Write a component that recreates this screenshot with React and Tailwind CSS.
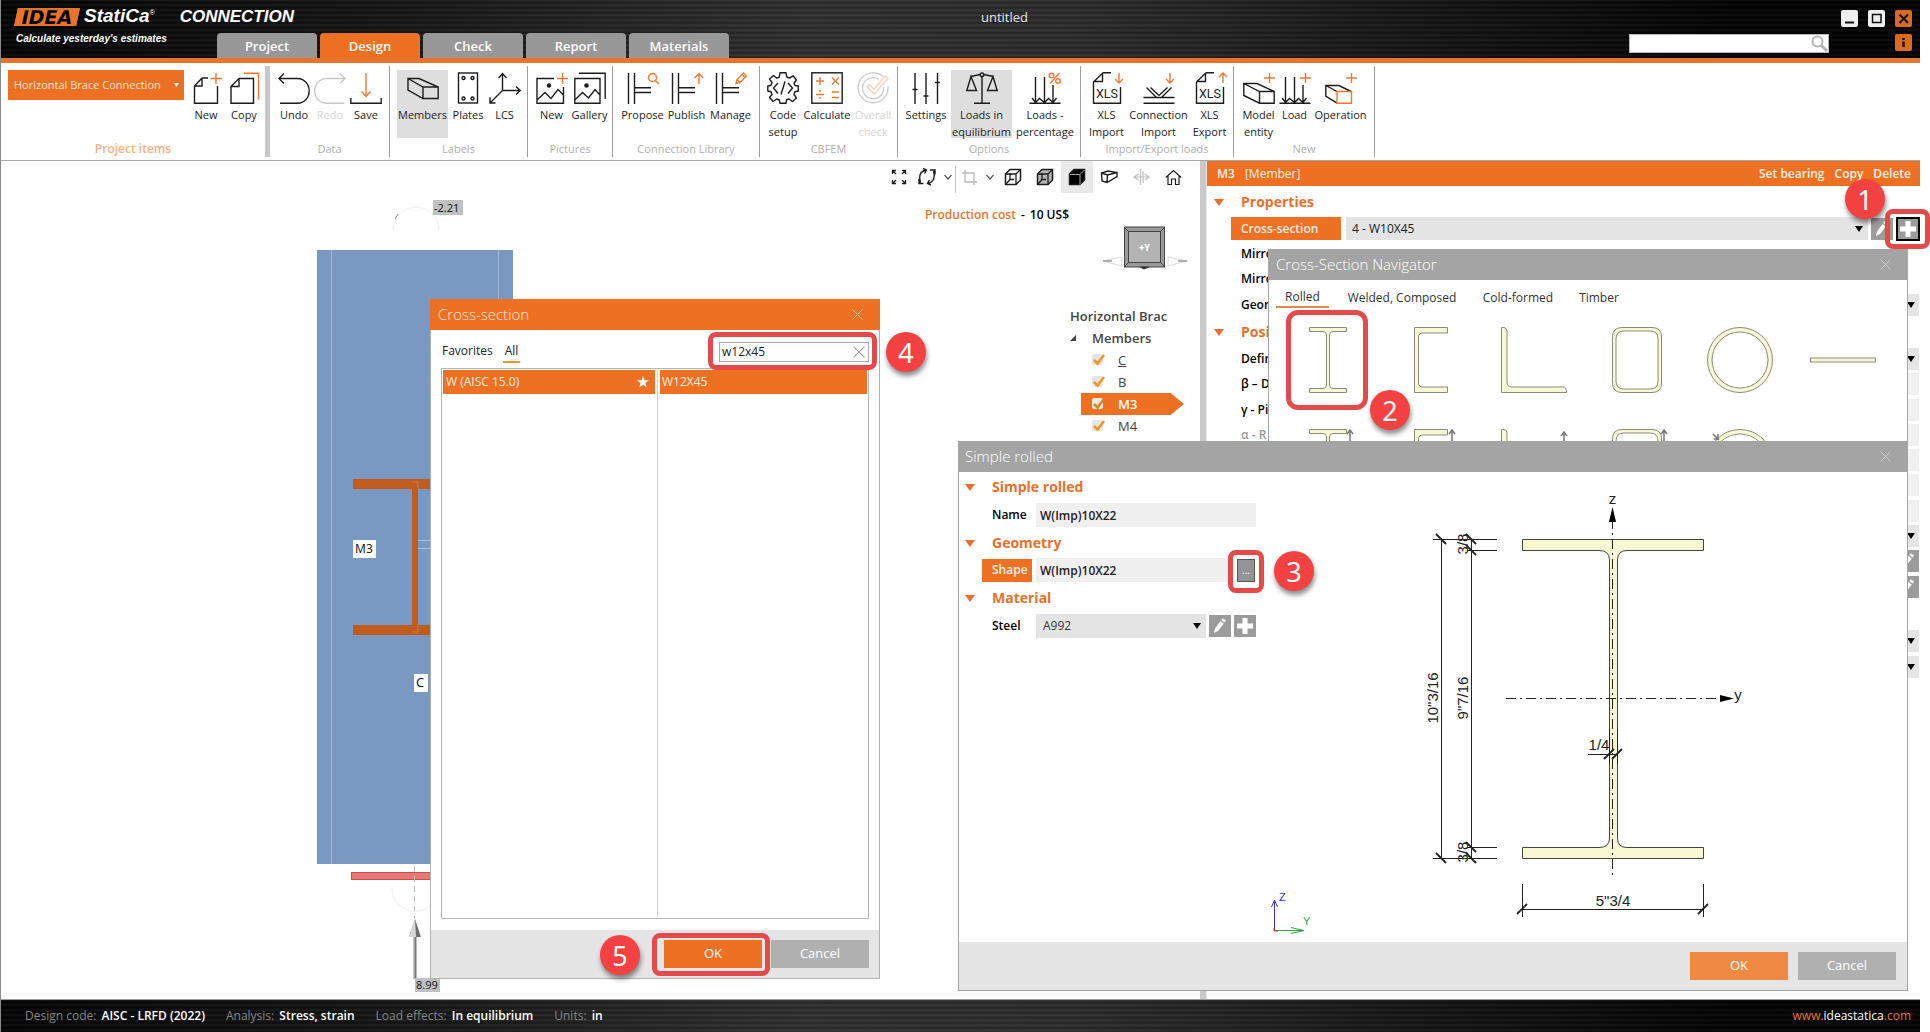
import React from "react";

const K = "#1c1c1c";
const O = "#ec7a35";

/* ---------- small shared pieces ---------- */

function Svg({ w = 32, h = 32, children, className = "", sw = 1.4, stroke = K }) {
  return (
    <svg width={w} height={h} viewBox={`0 0 ${w} ${h}`} fill="none" stroke={stroke} strokeWidth={sw} className={`shrink-0 overflow-visible ${className}`} aria-hidden="true">
      {children}
    </svg>
  );
}

const Caret = ({ className = "" }) => (
  <svg width="8" height="6" viewBox="0 0 8 6" className={`pointer-events-none ${className}`} aria-hidden="true">
    <path d="M0 0H8L4 6Z" fill="currentColor" />
  </svg>
);

const SectionCaret = () => (
  <svg width="10" height="7" viewBox="0 0 10 7" className="shrink-0 text-[#e8702a]" aria-hidden="true">
    <path d="M0 0H10L5 7Z" fill="currentColor" />
  </svg>
);

const Close = ({ size = 11, className = "" }) => (
  <svg width={size} height={size} viewBox="0 0 11 11" stroke="currentColor" strokeWidth="1" className={className} aria-hidden="true">
    <path d="M0.5 0.5 10.5 10.5M10.5 0.5 0.5 10.5" />
  </svg>
);

const PencilGlyph = () => (
  <svg width="22" height="22" viewBox="0 0 22 22" aria-hidden="true">
    <path d="M5 18 6 13.5 11.5 6 14.8 8.4 9.2 15.8ZM12.3 5 13.8 3.2 17 5.5 15.6 7.4Z" fill="#fff" />
  </svg>
);

const PlusGlyph = () => (
  <svg width="22" height="22" viewBox="0 0 22 22" aria-hidden="true">
    <path d="M11 3V19M3 11H19" stroke="#fff" strokeWidth="5" />
  </svg>
);

const SquareButton = ({ label, children, className = "" }) => (
  <button aria-label={label} className={`flex size-[22px] shrink-0 items-center justify-center bg-[#9b9b9b] ${className}`}>
    {children}
  </button>
);

const Step = ({ n, className }) => (
  <div className={`absolute z-50 flex size-10 items-center justify-center rounded-full bg-[#f44242] font-['Noto_Sans',sans-serif] text-[27px] leading-none text-white shadow-[1px_4px_5px_rgba(0,0,0,0.45)] ${className}`}>
    {n}
  </div>
);

const Mark = ({ className }) => (
  <div className={`pointer-events-none absolute z-40 rounded-[8px] border-5 border-[#e54a4a] ${className}`} />
);

/* ---------- ribbon icons ---------- */

const PageNew = () => (
  <Svg>
    <path d="M12 6 4.500 14V31.200H27.500V14M12 6H18M12 6V14H4.500" />
    <path d="M26 1V12M20.500 6.500H32" stroke={O} />
  </Svg>
);
const PageCopy = () => (
  <Svg>
    <path d="M11 6.500 3 14.500V31.200H25.500V6.500ZM11 6.500V14.500H3" />
    <path d="M16 1.200H30.500V27.500" stroke={O} />
  </Svg>
);
const Undo = () => (
  <Svg>
    <path d="M1 6.500H19.500C26 6.500 31.200 12 31.200 19C31.200 26 26 31.200 19.500 31.200H2" />
    <path d="M6 1.500 1 6.500 6 11.500" />
  </Svg>
);
const Redo = () => (
  <Svg stroke="#c9c9c9">
    <path d="M31 6.500H12.500C6 6.500 .8 12 .8 19C.8 26 6 31.200 12.500 31.200H30" />
    <path d="M26 1.500 31 6.500 26 11.500" />
  </Svg>
);
const Save = () => (
  <Svg>
    <path d="M.8 26V31.200H31.200V26" />
    <path d="M16 1V24M11.500 19.500 16 24.500 20.500 19.500" stroke={O} />
  </Svg>
);
const Members = () => (
  <Svg>
    <path d="M1 6.500H12L31.200 15V26.500H16L1 18ZM1 6.500 16 15H31.200M16 15V26.500" />
  </Svg>
);
const Plates = () => (
  <Svg>
    <rect x="6.500" y="1" width="19" height="30" />
    <circle cx="11.500" cy="6" r="1.500" />
    <circle cx="20.500" cy="6" r="1.500" />
    <circle cx="11.500" cy="26.500" r="1.500" />
    <circle cx="20.500" cy="26.500" r="1.500" />
  </Svg>
);
const Lcs = () => (
  <Svg>
    <path d="M13.500 1.500V18.500L1 31M13.500 18.500H31M9.500 6 13.500 1.500 17.500 6M27 14.500 31.200 18.500 27 22.500M1 25.500V31H6.500" />
  </Svg>
);
const PicNew = () => (
  <Svg>
    <path d="M18 6.500H1V31.200H27.500V15M1 28 9 20.500 15 26.500 22 17.500 27.500 23" />
    <circle cx="13" cy="13.500" r="1.600" fill={K} />
    <path d="M26.500 1V12M21 6.500H32" stroke={O} />
  </Svg>
);
const Gallery = () => (
  <Svg>
    <path d="M.8 6.500H26V31.200H.8ZM.8 28 8.500 20.500 14.500 26 21 17.500 26 23M5 1.200H31.200V27" />
    <circle cx="12.500" cy="13.500" r="1.600" fill={K} />
  </Svg>
);
const Frame = ({ children }) => (
  <Svg>
    <path d="M1.500 1V32M7.500 1V32M7.500 15.800H24M7.500 20.500H24" />
    {children}
  </Svg>
);
const Propose = () => (
  <Frame>
    <circle cx="25.500" cy="5.500" r="4" stroke={O} />
    <path d="M28.500 8.500 32 12" stroke={O} />
  </Frame>
);
const Publish = () => (
  <Frame>
    <path d="M28 12V1.500M23.500 6 28 1.500 32 6" stroke={O} />
  </Frame>
);
const Manage = () => (
  <Frame>
    <path d="M21 11.500 22 7.500 28.500 1 31.500 4 25 10.500ZM22.500 8 25 10.500M27 2.500 30 5.500" stroke={O} />
  </Frame>
);
const CodeSetup = () => (
  <Svg>
    <path d="M13 .8H19L19.800 5 22.500 6.200 26 3.800 29.500 8 27 11 28 13.500 31.300 14V19L28 19.800 27 22.500 29.500 26 25.500 29.500 22 27 19.500 28 19 31.300H13L12.300 28 9.800 27 6 29.500 2.500 25.500 5 22.500 4 19.800.8 19V14L4 13.200 5 10.500 2.500 7 6.500 3.500 9.800 6.200 12.300 5Z" strokeLinejoin="round" />
    <path d="M11 11 6.500 16 11 21.500M21 11 25.500 16 21 21.500M18 9.500 14 22.500" />
  </Svg>
);
const Calculate = () => (
  <Svg>
    <rect x=".8" y=".8" width="30.400" height="30.400" />
    <path d="M5 9H13M9 5V13M21 5.500 28 12.500M28 5.500 21 12.500M5 22.500H13M21 20H28M21 25.500H28" stroke={O} />
    <circle cx="9" cy="19" r="1" fill={O} stroke="none" />
    <circle cx="9" cy="26" r="1" fill={O} stroke="none" />
  </Svg>
);
const Overall = () => (
  <Svg stroke="#cfcfcf">
    <path d="M26 4.500A15 15 0 1 0 31 14M22 7.500A10.500 10.500 0 1 0 26.500 15" />
    <path d="M10 15 12.500 12.500 17 17.500 28 4 31 6.500 17.500 22Z" stroke="#f7d3bd" />
  </Svg>
);
const Settings = () => (
  <Svg>
    <path d="M5 1V32M16 1V32M27.500 1V32M2.500 17.500H7.500M13.500 24H18.500M25 10.500H30" />
  </Svg>
);
const Scales = () => (
  <Svg>
    <path d="M16 4V31.200M8 31.200H24M5 4.500 14 2.500M18 2.500 27 4.500M5 4.500.8 18.500H10.500ZM27 4.500 21.500 18.500H31.200Z" />
    <circle cx="16" cy="2.800" r="1.800" />
  </Svg>
);
const Arrows3 = ({ children }) => (
  <Svg>
    <path d="M.5 31.300H31.500M6.500 5V30M15.500 5V30M24 13V30M3 26 6.500 30.500 10.500 26.500 15.500 30.500 19.500 26.500 24 30.500 27.500 26" />
    {children}
  </Svg>
);
const Percent = () => (
  <Arrows3>
    <circle cx="22.500" cy="3.500" r="2.300" stroke={O} />
    <circle cx="29" cy="9" r="2.300" stroke={O} />
    <path d="M30.500 1 21 11.500" stroke={O} />
  </Arrows3>
);
const LoadNew = () => (
  <Arrows3>
    <path d="M26.500 1V11M21 6H32" stroke={O} />
  </Arrows3>
);
const Xls = ({ up }) => (
  <Svg>
    <path d="M12 .8H20M12 .8 2.500 10V31.200H29.500V15M11.500 1V9.500H2.500" />
    <text x="16" y="25.500" textAnchor="middle" fontSize="12.500" fill={K} stroke="none" fontFamily="Roboto, sans-serif">XLS</text>
    <path d={up ? "M29 11V1M25 5 29 1 33 5" : "M28 1V11M24 7 28 11 32 7"} stroke={O} />
  </Svg>
);
const XlsUp = () => <Xls up />;
const ConnImport = () => (
  <Svg>
    <path d="M.5 25.500H31.500M.5 31.300H31.500M3.500 15.500 13.500 25.500M7.500 15.500 16 23.500M28.500 15.500 18.500 25.500M24.500 15.500 16 23.500" />
    <path d="M27 1V11M23 7 27 11 31 7" stroke={O} />
  </Svg>
);
const ModelEntity = () => (
  <Svg>
    <path d="M.8 11.500H14L31.200 19.500V31.200H16.500L.8 23.500ZM.8 11.500 16.500 19.500H31.200M16.500 19.500V31.200" />
    <path d="M26.500 1V11M21 6H32" stroke={O} />
  </Svg>
);
const Operation = () => (
  <Svg>
    <path d="M12 31.200.8 24V13.500H14L26 19.500M.8 13.500 12 19.500" />
    <path d="M12 19.500H26.500V31.200H12ZM26.500 1V11M21 6H32" stroke={O} />
  </Svg>
);

/* ---------- ribbon ---------- */

function RibbonButton({ icon: Icon, lines, width, active, disabled }) {
  return (
    <button
      disabled={disabled}
      className={`flex h-[68px] shrink-0 flex-col items-center pt-[2px] text-[11px] leading-[17px] whitespace-nowrap ${width} ${active ? "bg-[#dedede]" : ""} ${disabled ? "text-[#d5d5d5]" : "text-[#222]"}`}
    >
      <Icon />
      <span className="mt-[2px] flex flex-col items-center">
        {lines.map((l) => (
          <span key={l}>{l}</span>
        ))}
      </span>
    </button>
  );
}

const groups = [
  { title: "Data", cls: "w-[120px]", buttons: [
    { icon: Undo, lines: ["Undo"], width: "w-9" },
    { icon: Redo, lines: ["Redo"], width: "w-9", disabled: true },
    { icon: Save, lines: ["Save"], width: "w-9" },
  ] },
  { title: "Labels", cls: "w-[138px]", buttons: [
    { icon: Members, lines: ["Members"], width: "w-[51px]", active: true },
    { icon: Plates, lines: ["Plates"], width: "w-10" },
    { icon: Lcs, lines: ["LCS"], width: "w-[33px]" },
  ] },
  { title: "Pictures", cls: "w-[85px]", buttons: [
    { icon: PicNew, lines: ["New"], width: "w-[38px]" },
    { icon: Gallery, lines: ["Gallery"], width: "w-[38px]" },
  ] },
  { title: "Connection Library", cls: "w-[147px]", buttons: [
    { icon: Propose, lines: ["Propose"], width: "w-[46px]" },
    { icon: Publish, lines: ["Publish"], width: "w-[42px]" },
    { icon: Manage, lines: ["Manage"], width: "w-[46px]" },
  ] },
  { title: "CBFEM", cls: "w-[138px]", buttons: [
    { icon: CodeSetup, lines: ["Code", "setup"], width: "w-[36px]" },
    { icon: Calculate, lines: ["Calculate"], width: "w-[52px]" },
    { icon: Overall, lines: ["Overall", "check"], width: "w-10", disabled: true },
  ] },
  { title: "Options", cls: "w-[183px]", buttons: [
    { icon: Settings, lines: ["Settings"], width: "w-[50px]" },
    { icon: Scales, lines: ["Loads in", "equilibrium"], width: "w-[61px]", active: true },
    { icon: Percent, lines: ["Loads -", "percentage"], width: "w-[66px]" },
  ] },
  { title: "Import/Export loads", cls: "w-[153px]", buttons: [
    { icon: Xls, lines: ["XLS", "Import"], width: "w-10" },
    { icon: ConnImport, lines: ["Connection", "Import"], width: "w-16" },
    { icon: XlsUp, lines: ["XLS", "Export"], width: "w-[38px]" },
  ] },
  { title: "New", cls: "w-[141px]", buttons: [
    { icon: ModelEntity, lines: ["Model", "entity"], width: "w-10" },
    { icon: LoadNew, lines: ["Load"], width: "w-8" },
    { icon: Operation, lines: ["Operation"], width: "w-[60px]" },
  ] },
];

const Ribbon = () => (
  <div className="flex border-b border-[#a9a9a9] bg-white pt-[3px] pb-[3px]">
    <div className="flex h-[91px] w-[269px] shrink-0 flex-col border-r-5 border-[#c8c8c8]">
      <div className="flex items-start pt-[4px] pl-[7px]">
        <div className="relative w-44">
          <select aria-label="Project item" className="h-[30px] w-full appearance-none bg-[#ed7023] pl-[6px] text-[11px] text-[#ffe5d2]">
            <option>Horizontal Brace Connection</option>
          </select>
          <svg width="5" height="4" viewBox="0 0 5 4" className="pointer-events-none absolute top-[13px] right-[5px]" aria-hidden="true">
            <path d="M0 0H5L2.500 4Z" fill="#fff" />
          </svg>
        </div>
        <div className="flex pl-[3px]">
          <RibbonButton icon={PageNew} lines={["New"]} width="w-[38px]" />
          <RibbonButton icon={PageCopy} lines={["Copy"]} width="w-[38px]" />
        </div>
      </div>
      <div className="mt-[3px] text-center text-xs leading-4 font-semibold text-[#f6b183]">Project items</div>
    </div>
    {groups.map((g) => (
      <div key={g.title} className={`flex h-[91px] shrink-0 flex-col border-r border-[#9d9d9d] ${g.cls}`}>
        <div className="flex justify-center pt-[4px] pl-px">
          {g.buttons.map((b, i) => (
            <RibbonButton key={i} {...b} />
          ))}
        </div>
        <div className="mt-[3px] text-center text-[11px] leading-4 text-[#b0b0b0]">{g.title}</div>
      </div>
    ))}
  </div>
);

/* ---------- title bar ---------- */

const metal = "bg-[#161616] bg-[repeating-linear-gradient(180deg,rgba(255,255,255,0.07)_0px,rgba(255,255,255,0.02)_1px,rgba(0,0,0,0.2)_3px,rgba(255,255,255,0.05)_5px),linear-gradient(90deg,#030303_0%,#151515_20%,#303030_42%,#2c2c2c_56%,#121212_76%,#020202_90%)]";

const TitleBar = () => (
  <header className={`grid h-[63px] grid-cols-[728px_1fr_auto] border-b-5 border-[#e8742c] ${metal}`}>
    <div className="flex">
      <div className="w-[216px] shrink-0 pt-[7px] pl-[15px] font-['Liberation_Sans',Arial,sans-serif] text-white italic">
        <div className="flex h-[19px] items-center whitespace-nowrap">
          <span className="flex h-[18px] w-[62px] shrink-0 -skew-x-12 items-center justify-center border-2 border-[#e8742c] bg-[#e8742c] font-['DejaVu_Sans',sans-serif] text-[19px] leading-none font-bold text-black not-italic">IDEA</span>
          <span className="ml-[6px] text-[19px] font-bold">StatiCa</span>
          <sup className="text-[7px]">®</sup>
          <span className="ml-[25px] text-[17px] font-bold">CONNECTION</span>
        </div>
        <div className="mt-[5px] text-[10px] leading-4 font-bold whitespace-nowrap">Calculate yesterday's estimates</div>
      </div>
      <nav className="flex gap-[3px] self-end">
        {["Project", "Design", "Check", "Report", "Materials"].map((t) => (
          <button key={t} className={`h-[25px] w-[100px] rounded-t-[4px] pt-[2px] text-[13px] font-semibold text-white ${t === "Design" ? "bg-[#ed7023]" : "bg-[#989898]"}`}>
            {t}
          </button>
        ))}
      </nav>
    </div>
    <div className="pt-[7px] pl-[252px] text-[13px] leading-5 text-[#e4e4e4]">untitled</div>
    <div className="flex gap-[11px] pr-2">
      <div className="relative mt-[34px] w-[200px]">
        <input aria-label="Search" className="block h-[19px] w-full border border-[#bbb] bg-white" />
        <svg width="17" height="17" viewBox="0 0 17 17" className="pointer-events-none absolute top-px right-px" fill="none" stroke="#b5b5b5" strokeWidth="2" aria-hidden="true">
          <circle cx="6.500" cy="6.500" r="5" />
          <path d="M10 10 16 16" strokeWidth="3" />
        </svg>
      </div>
      <div className="mt-[10px] flex w-[72px] flex-col items-end gap-[7px]">
        <div className="flex gap-[10px]">
          <button aria-label="Minimize" className="size-[17px] rounded-[2px] bg-[#efefef]">
            <svg width="17" height="17" viewBox="0 0 17 17" aria-hidden="true"><path d="M4 12.500H13" stroke="#111" strokeWidth="2" /></svg>
          </button>
          <button aria-label="Maximize" className="size-[17px] rounded-[2px] bg-[#efefef]">
            <svg width="17" height="17" viewBox="0 0 17 17" fill="none" aria-hidden="true"><rect x="4.500" y="4.500" width="8.500" height="8" stroke="#111" strokeWidth="1.500" /></svg>
          </button>
          <button aria-label="Close window" className="size-[17px] rounded-[2px] bg-[#d96b22]">
            <svg width="17" height="17" viewBox="0 0 17 17" aria-hidden="true"><path d="M4.500 4.500 13 13M13 4.500 4.500 13" stroke="#111" strokeWidth="2" /></svg>
          </button>
        </div>
        <button aria-label="Information" className="size-[17px] rounded-[2px] bg-[#d96b22]">
          <svg width="17" height="17" viewBox="0 0 17 17" aria-hidden="true"><path d="M8.500 4V6M8.500 7.500V13" stroke="#111" strokeWidth="2.500" /></svg>
        </button>
      </div>
    </div>
  </header>
);

/* ---------- 3D scene ---------- */

const Scene = () => (
  <svg width="520" height="838" viewBox="0 161 520 838" className="absolute top-0 -left-px font-['Noto_Sans',sans-serif]" aria-hidden="true">
    <path d="M393 230A23 23 0 0 1 439 230" fill="none" stroke="#f0f0f0" />
    <path d="M395 219 398 214" stroke="#888" />
    <rect x="433" y="200" width="30" height="15" fill="#c0c0c0" />
    <text x="434" y="211.500" fontSize="11" fill="#222">-2.21</text>
    <rect x="317" y="250" width="196" height="614" fill="#7a99c2" />
    <path d="M331.500 250V864M498.500 250V864" stroke="#a0b6d4" />
    <path d="M418 540.500H440M418 548.500H440" stroke="#a9bdd8" />
    <path d="M353 479H440V489H418V625H440V635H353V625H412V489H353Z" fill="#c05c1e" />
    <path d="M412 482H418V489M412 632H418V625" fill="none" stroke="#d27a35" />
    <rect x="353" y="540" width="23" height="18" fill="#fff" />
    <text x="355" y="553" fontSize="12" fill="#222">M3</text>
    <rect x="414" y="674" width="14" height="18" fill="#fff" />
    <text x="416" y="687" fontSize="13" fill="#222">C</text>
    <rect x="351.500" y="872.500" width="90" height="7" fill="#e87878" stroke="#c94d4d" />
    <path d="M414.500 866V918" stroke="#c5b8bd" strokeDasharray="6 4" />
    <path d="M392 888A23 23 0 0 0 431 905" fill="none" stroke="#f0f0f0" />
    <path d="M415 937V979" stroke="#777" strokeWidth="3" />
    <path d="M414 937V979" stroke="#d2d2d2" />
    <path d="M415 919 421 937H409Z" fill="#707070" />
    <path d="M415 919 416 937H409Z" fill="#d9d9d9" />
    <rect x="415" y="978" width="25" height="14" fill="#c0c0c0" />
    <text x="416" y="989" fontSize="11" fill="#222">8.99</text>
  </svg>
);

const CubeIcon = ({ fill = "none", solid }) => (
  <Svg w={18} h={18} sw={1.5}>
    <path d="M1.500 6 6 1.500H16.500V12L12 16.500H1.500Z" fill={solid ? "#000" : fill} />
    {solid ? (
      <path d="M2 6.500H12V16.500M12 6.500 16.500 2" stroke="#aaa" strokeWidth="1" />
    ) : (
      <path d="M1.500 6H12V16.500M12 6 16.500 1.500M6 5V11.500H10M6 11.500 2 16" strokeWidth="1.300" />
    )}
  </Svg>
);

const Chevron = () => (
  <Svg w={8} h={6} stroke="#555" sw={1.2}>
    <path d="M.5 1 4 5 7.500 1" />
  </Svg>
);

const tool = "flex h-8 w-8 items-center justify-center";

const ViewToolbar = () => (
  <div className="absolute top-0 right-[11px] flex h-8 items-center">
    <button aria-label="Zoom all" className="flex h-8 w-7 items-center justify-center">
      <Svg w={16} h={16} sw={1.3}>
        <path d="M1.500 5V1.500H5M1.500 1.500 5 5M11 1.500H14.500V5M14.500 1.500 11 5M1.500 11V14.500H5M1.500 14.500 5 11M11 14.500H14.500V11M14.500 14.500 11 11" />
      </Svg>
    </button>
    <button aria-label="Rotate" className="flex h-8 w-7 items-center justify-center">
      <Svg w={18} h={18} sw={1.4}>
        <path d="M2.500 14.500C.5 9 1.500 3.500 8 2M5 .5 8.500 2 6.500 5.500M1 11V15.500H5.500M15.500 3C17.500 8.500 16 14 10 15.500M13 17.200 9.500 15.500 11.500 12M17 6.500V2H12" />
      </Svg>
    </button>
    <button aria-label="Rotate options" className="flex h-8 w-[13px] items-center justify-center"><Chevron /></button>
    <span className="mx-px h-[27px] w-px self-end bg-[#c8c8c8]" />
    <button aria-label="Clip" className="flex h-8 w-[25px] items-center justify-center">
      <Svg w={15} h={15} stroke="#b9b9b9" sw={1.3}>
        <path d="M3 0V12H15M0 3H12V15" />
      </Svg>
    </button>
    <button aria-label="Clip options" className="flex h-8 w-[15px] items-center justify-center"><Chevron /></button>
    <button aria-label="Wireframe" className={tool}><CubeIcon /></button>
    <button aria-label="Transparent" className={tool}><CubeIcon fill="#b5b5b5" /></button>
    <button aria-label="Solid" className={`${tool} bg-[#e9e9e9]`}><CubeIcon solid /></button>
    <button aria-label="Member view" className={tool}>
      <Svg w={18} h={14} sw={1.4}>
        <path d="M1.500 3 8 1 17 2.500V6.500L7 12.500 2 11ZM1.500 3 7.500 5 17 2.500M7.500 5 7 12.500" />
      </Svg>
    </button>
    <button aria-label="Mirror" className={tool}>
      <Svg w={17} h={16} stroke="#c0c0c0" sw={1.2}>
        <path d="M7.500 0V16M10 2V14M5.500 5 1 8 5.500 11M12 5 16 8 12 11M1 8H16" />
      </Svg>
    </button>
    <button aria-label="Home view" className={tool}>
      <Svg w={17} h={17} sw={1.2}>
        <path d="M.8 8.500 8.500 1.500 16.200 8.500M3 7V15.500H6.500V10H10.500V15.500H14V7" />
      </Svg>
    </button>
  </div>
);

const Tree = () => (
  <div className="absolute top-[144px] right-[10px] w-[120px] text-[13px] leading-[22px] text-[#444]">
    <div className="font-semibold whitespace-nowrap">Horizontal Brac</div>
    <div className="flex items-center font-semibold">
      <svg width="6" height="6" viewBox="0 0 6 6" aria-hidden="true"><path d="M6 0V6H0Z" fill="#444" /></svg>
      <span className="pl-[16px]">Members</span>
    </div>
    {["C", "B", "M3", "M4"].map((m) => {
      const sel = m === "M3";
      return (
        <label key={m} className={`ml-[11px] flex w-[103px] items-center pl-[11px] ${sel ? "bg-[#ed7023] font-semibold text-white [clip-path:polygon(0_0,87%_0,100%_50%,87%_100%,0_100%)]" : ""}`}>
          <span className="relative flex size-[13px]">
            <input type="checkbox" defaultChecked className={`size-[11px] appearance-none rounded-[2px] ${sel ? "bg-[#fbe9dc]" : "bg-[#e4e4e4]"}`} />
            <svg width="13" height="13" viewBox="0 0 13 13" className="pointer-events-none absolute top-0 left-0" aria-hidden="true">
              <path d="M2 6 5.500 9.500 12 1" fill="none" stroke={sel ? "#c98a3a" : "#f0961e"} strokeWidth="2.500" />
            </svg>
          </span>
          <span className={`pl-[13px] ${m === "C" ? "underline" : ""}`}>{m}</span>
        </label>
      );
    })}
  </div>
);

const ViewCube = () => (
  <svg width="86" height="44" viewBox="0 0 86 44" className="absolute top-[65px] right-[12px]" aria-hidden="true">
    <path d="M1 35 20 31V40ZM85 35 66 31V40Z" fill="none" stroke="#dcdcdc" />
    <path d="M1 35H10M76 35H85" stroke="#b0b0b0" strokeWidth="2" />
    <rect x="22.500" y="1" width="40" height="40" fill="#9a9a9a" stroke="#444" />
    <rect x="26.500" y="5.500" width="32" height="31" fill="#b3b3b3" stroke="#444" />
    <path d="M22 1 27 6M63 1 58 6M22 41 27 36M63 41 58 36M38 41H47L42 43Z" stroke="#444" />
    <text x="42.500" y="25" textAnchor="middle" fontSize="9" fontWeight="bold" fill="#fff" fontFamily="Roboto, sans-serif">+Y</text>
  </svg>
);

/* ---------- properties panel ---------- */

const Heading = ({ children, className = "" }) => (
  <h2 className={`flex items-center gap-[17px] text-sm leading-5 font-bold text-[#e8702a] ${className}`}>
    <SectionCaret />
    {children}
  </h2>
);

const clip = "w-[27px] overflow-hidden whitespace-nowrap";

function PropRow({ label, kind, muted }) {
  const tint = kind === "caret" ? "bg-[#e5e5e5]" : kind === "pencil" ? "bg-[#9b9b9b]" : kind === "field" ? "bg-[#f0f0f0]" : "";
  return (
    <div className={`flex items-start justify-between text-xs leading-[22px] font-semibold ${muted ? "text-[#999]" : "text-black"}`}>
      <span className={clip}>{label}</span>
      <span className={`flex h-[22px] w-[22px] items-center justify-end ${tint}`}>
        {kind === "caret" && <Caret className="mr-1" />}
        {kind === "pencil" && <PencilGlyph />}
      </span>
    </div>
  );
}

const positionRows = [
  ["Defin", "caret"],
  ["β – D", "field"],
  ["γ - Pi", "field"],
  ["α - R", "field", true],
  ["", "field"],
  ["", "field"],
  ["", "field"],
  ["", "caret"],
  ["", "pencil"],
  ["", "pencil"],
];

const Properties = () => (
  <aside className="w-[713px] shrink-0 bg-white">
    <div className="flex h-[25px] items-center bg-[#ed7023] pr-[9px] pl-[10px] text-xs font-semibold text-[#fff0e3]">
      <span>M3</span>
      <span className="pl-[10px] font-normal">[Member]</span>
      <div className="ml-auto flex gap-[10px]">
        <button>Set bearing</button>
        <button>Copy</button>
        <button>Delete</button>
      </div>
    </div>
    <Heading className="mt-[6px] pl-[7px]">Properties</Heading>
    <div className="mt-[5px] flex items-center pl-[24px]">
      <label htmlFor="cross-section" className="flex h-[23px] w-[110px] items-center bg-[#ed7023] pl-[10px] text-xs font-semibold text-[#fff0e3]">Cross-section</label>
      <div className="relative ml-[5px] flex-1">
        <select id="cross-section" className="block h-[23px] w-full appearance-none bg-[#e4e4e4] pl-[6px] text-xs text-[#222]">
          <option>4 - W10X45</option>
        </select>
        <Caret className="absolute top-[9px] right-[5px]" />
      </div>
      <SquareButton label="Edit cross-section" className="ml-[3px]"><PencilGlyph /></SquareButton>
      <SquareButton label="New cross-section" className="mr-px ml-1 outline-2 -outline-offset-1 outline-black"><PlusGlyph /></SquareButton>
    </div>
    <div className="mt-[3px] grid h-[76px] auto-rows-fr pr-[1px] pl-[34px]">
      <PropRow label="Mirro" />
      <PropRow label="Mirro" />
      <PropRow label="Geon" kind="caret" />
    </div>
    <Heading className="mt-[3px] pl-[7px]"><span className={clip}>Posi</span></Heading>
    <div className="mt-[6px] grid h-[253px] auto-rows-fr pr-[1px] pl-[34px]">
      {positionRows.map(([l, k, m], i) => (
        <PropRow key={i} label={l} kind={k} muted={m} />
      ))}
    </div>
    <div className="mt-[29px] grid h-[51px] auto-rows-fr pr-[1px] pl-[34px]">
      <PropRow label="" kind="caret" />
      <PropRow label="" kind="caret" />
    </div>
  </aside>
);

/* ---------- dialogs ---------- */

const DialogTitle = ({ children, className, close }) => (
  <div className={`flex h-[31px] items-center justify-between text-[15px] font-light ${className}`}>
    <h2>{children}</h2>
    <button aria-label={`Close ${children}`} className={close}>
      <Close />
    </button>
  </div>
);

const CrossSectionDialog = () => (
  <section className="absolute top-[138px] left-[430px] z-10 flex h-[680px] w-[450px] flex-col border border-[#b0b0b0] bg-white">
    <DialogTitle className="-mx-px -mt-px bg-[#ed7023] pr-[17px] pl-[8px] text-[#ffe9da]" close="text-[#f8c3a0]">Cross-section</DialogTitle>
    <div className="flex h-[38px] items-center pr-[10px] pl-[11px] text-xs text-[#222]">
      <button className="pt-[4px]">Favorites</button>
      <button className="mt-[6px] ml-[10px] border-b-2 border-[#f0962e] px-[2px] leading-5">All</button>
      <div className="relative mt-[5px] ml-auto w-[150px]">
        <input aria-label="Search cross-sections" defaultValue="w12x45" className="block h-5 w-full border border-[#aaa] pl-[2px] text-xs" />
        <button aria-label="Clear search" className="absolute top-1 right-1 text-[#999]">
          <Close size={12} />
        </button>
      </div>
    </div>
    <div className="mx-[10px] mb-[11px] grid flex-1 grid-cols-[215px_1fr] border border-[#b5b5b5] p-px text-xs">
      <div className="border-r border-[#d2d2d2] pr-[2px]">
        <button className="flex h-6 w-full items-center justify-between bg-[#ed7023] pr-[6px] pl-[3px] text-[#fff0e3]">
          W (AISC 15.0)
          <svg width="12" height="12" viewBox="0 0 24 24" fill="#fff" aria-hidden="true">
            <path d="M12 0 15 8.500H24L17 14 19.500 23 12 17.500 4.500 23 7 14 0 8.500H9Z" />
          </svg>
        </button>
      </div>
      <div className="pl-[2px]">
        <button className="flex h-6 w-full items-center bg-[#ed7023] pl-[2px] text-[#fff0e3]">W12X45</button>
      </div>
    </div>
    <div className="flex h-12 items-center justify-end gap-[9px] bg-[#e5e5e5] pr-[10px] pb-px text-[13px] text-white">
      <button className="h-7 w-[98px] bg-[#ed7023]">OK</button>
      <button className="h-7 w-[98px] bg-[#b0b0b0]">Cancel</button>
    </div>
  </section>
);

const Y = "#f7f8d6";
const G = "#8b8b78";

const shapes = {
  i: <path d="M14.500 1.500H51.500V5.500H38Q34.500 5.500 34.500 9V59Q34.500 62.500 38 62.500H51.500V66.500H14.500V62.500H28Q31.500 62.500 31.500 59V9Q31.500 5.500 28 5.500H14.500Z" />,
  c: <path d="M16.500 1.500H49.500V7H25Q20.500 7 20.500 11V57Q20.500 61 25 61H49.500V66.500H16.500Z" />,
  l: <path d="M.5 1.500H3Q6 2 6 5V56Q6 61 11 61H62Q65.500 61 65.500 66.500H.5Z" />,
  box: <path fillRule="evenodd" d="M18 1.500H48Q57.500 1.500 57.500 11V57Q57.500 66.500 48 66.500H18Q8.500 66.500 8.500 57V11Q8.500 1.500 18 1.500ZM20 5Q12 5 12 13V55Q12 63 20 63H46Q54 63 54 55V13Q54 5 46 5Z" />,
  pipe: <path fillRule="evenodd" d="M33 1.500A32.500 32.500 0 0 1 33 66.500A32.500 32.500 0 0 1 33 1.500ZM33 6A28 28 0 0 0 33 62A28 28 0 0 0 33 6Z" />,
  plate: <rect x=".5" y="32" width="65" height="4" />,
};

const arrows = {
  i: "M55 16V3M52 6 55 2 58 6",
  c: "M54 16V3M51 6 54 2 57 6",
  l: "M63 16V5M60 8 63 4 66 8",
  box: "M60 16V3M57 6 60 2 63 6",
  pipe: "M6 6 12 12M7 11H11V6",
};

const Shape = ({ id, arrow }) => (
  <button aria-label={`Section ${id}`} className="h-[68px] w-[66px] shrink-0">
    <svg width="66" height="68" viewBox="0 0 66 68" fill={Y} stroke={G} strokeWidth="1" aria-hidden="true" className="overflow-visible">
      {shapes[id]}
      {arrow && <path d={arrows[id]} fill="none" stroke="#777" strokeWidth="1.500" />}
    </svg>
  </button>
);

const Navigator = () => (
  <section className="absolute top-[88px] right-[12px] z-10 flex h-[400px] w-[640px] flex-col border border-[#a4a4a4] bg-white">
    <DialogTitle className="-mx-px -mt-px bg-[#a4a4a4] pr-[17px] pl-[8px] text-white" close="text-[#cdcdcd]">Cross-Section Navigator</DialogTitle>
    <div className="flex gap-[12px] pt-[8px] pl-[7px] text-xs leading-[18px] text-[#333]">
      <button className="w-[53px] border-b-2 border-[#e08a4a]">Rolled</button>
      <button className="w-[122px]">Welded, Composed</button>
      <button className="w-[86px]">Cold-formed</button>
      <button className="w-[52px]">Timber</button>
    </div>
    <div className="flex gap-[37px] pt-[18px] pl-[26px]">
      {Object.keys(shapes).map((s) => (
        <Shape key={s} id={s} />
      ))}
    </div>
    <div className="flex gap-[37px] pt-[34px] pl-[26px]">
      {["i", "c", "l", "box", "pipe"].map((s) => (
        <Shape key={s} id={s} arrow />
      ))}
    </div>
  </section>
);

/* One oblique tick of a dimension line; dir is 1 for "\" and -1 for "/" */
const Tick = ({ x, y, dir = 1 }) => <path d={`M${x - 5 * dir} ${y - 5}L${x + 5 * dir} ${y + 5}`} strokeWidth="1.800" />;

const SectionDrawing = () => (
  <svg width="330" height="440" viewBox="1420 490 330 440" fill="none" stroke="#222" strokeWidth="1" className="shrink-0 font-['Liberation_Sans',Arial,sans-serif]" aria-label="Section dimensions">
    <path d="M1522.500 540.500H1703.500V551.500H1627Q1617.500 551.500 1617.500 561V839Q1617.500 848.500 1627 848.500H1703.500V859.500H1522.500V848.500H1599Q1609.500 848.500 1609.500 839V561Q1609.500 551.500 1599 551.500H1522.500Z" fill="#f8f9d3" stroke="#444" />
    <path d="M1612.500 520V876M1506 699.500H1722" strokeDasharray="10 4 2 4" />
    <path d="M1612.500 508 1616 523H1609ZM1734 699.500 1720 696V703Z" fill="#000" stroke="none" />
    <path d="M1433 540.500H1497M1433 859.500H1497M1467 551.500H1497M1467 848.500H1497M1441.500 540V860M1471.500 540V860M1522.500 885V918M1703.500 885V918M1522 910.500H1704M1588 755.500H1617" />
    <path d="M1609.500 730V765M1617.500 730V765" />
    <Tick x={1441} y={540} />
    <Tick x={1441} y={859} />
    <Tick x={1471} y={540} />
    <Tick x={1471} y={551} />
    <Tick x={1471} y={848} />
    <Tick x={1471} y={859} />
    <Tick x={1522} y={910} dir={-1} />
    <Tick x={1703} y={910} dir={-1} />
    <Tick x={1609} y={755} dir={-1} />
    <Tick x={1617} y={755} dir={-1} />
    <g fill="#222" stroke="none" fontSize="15" textAnchor="middle">
      <text x="1612.500" y="505">z</text>
      <text x="1738" y="701">y</text>
      <text x="1599" y="751">1/4</text>
      <text x="1613" y="907">5"3/4</text>
      <text transform="translate(1438 699) rotate(-90)">10"3/16</text>
      <text transform="translate(1468 699) rotate(-90)">9"7/16</text>
      <text transform="translate(1468 545) rotate(-90)">3/8</text>
      <text transform="translate(1468 853) rotate(-90)">3/8</text>
    </g>
  </svg>
);

const field = "h-6 flex-1 min-w-0 bg-[#f0f0f0] pl-[4px] text-xs font-semibold text-[#222]";

const SimpleRolled = () => (
  <section className="absolute top-[280px] right-[12px] z-20 flex h-[550px] w-[950px] flex-col border border-[#a4a4a4] bg-white">
    <DialogTitle className="-mx-px -mt-px bg-[#a4a4a4] pr-[17px] pl-[7px] text-white" close="text-[#cdcdcd]">Simple rolled</DialogTitle>
    <div className="flex flex-1 justify-between pr-[157px] pl-[6px]">
      <form className="w-[291px] pt-[5px]">
        <Heading>Simple rolled</Heading>
        <div className="mt-[6px] flex items-center">
          <label htmlFor="name" className="w-[71px] pl-[27px] text-xs font-semibold">Name</label>
          <input id="name" defaultValue="W(Imp)10X22" className={field} />
        </div>
        <Heading className="mt-[6px]">Geometry</Heading>
        <div className="mt-[5px] flex items-center">
          <label htmlFor="shape" className="mr-1 ml-[17px] flex h-[23px] w-[50px] items-center bg-[#ed7023] pl-[10px] text-xs font-semibold text-[#fff0e3]">Shape</label>
          <input id="shape" defaultValue="W(Imp)10X22" className={field} />
          <button type="button" aria-label="Choose shape" className="mr-px ml-[8px] flex h-[23px] w-[18px] items-center justify-center border border-[#555] bg-[#949494] text-[10px] text-white">...</button>
        </div>
        <Heading className="mt-[6px]">Material</Heading>
        <div className="mt-[6px] flex items-center">
          <label htmlFor="steel" className="w-[71px] pl-[27px] text-xs font-semibold">Steel</label>
          <div className="relative flex-1">
            <select id="steel" className="block h-6 w-full appearance-none bg-[#e4e4e4] pl-[7px] text-xs text-[#333]">
              <option>A992</option>
            </select>
            <Caret className="absolute top-[9px] right-[5px]" />
          </div>
          <SquareButton label="Edit steel" className="ml-[3px]"><PencilGlyph /></SquareButton>
          <SquareButton label="New steel" className="ml-[3px]"><PlusGlyph /></SquareButton>
        </div>
      </form>
      <div className="flex gap-[109px]">
        <svg width="42" height="42" viewBox="1268 893 42 42" fill="none" className="mb-2 self-end" aria-hidden="true">
          <path d="M1273.500 931V902M1270.500 908 1273.500 901 1276.500 908" stroke="#3434d0" />
          <path d="M1273.500 931.500H1303M1290 928.500 1303 931.500 1290 934.500" stroke="#2f9e4d" />
          <path d="M1273 929V932H1277" stroke="#d03030" />
          <text x="1278" y="902" fontSize="11" fill="#3434d0" fontFamily="Liberation Sans, sans-serif">Z</text>
          <text x="1302" y="926" fontSize="11" fill="#2f9e4d" fontFamily="Liberation Sans, sans-serif">Y</text>
        </svg>
        <div className="pt-[17px]"><SectionDrawing /></div>
      </div>
    </div>
    <div className="flex h-12 shrink-0 items-center justify-end gap-[10px] bg-[#e5e5e5] pr-[11px] text-[13px] text-white">
      <button className="h-7 w-[98px] bg-[#f08a42]">OK</button>
      <button className="h-7 w-[98px] bg-[#b0b0b0]">Cancel</button>
    </div>
  </section>
);

/* ---------- page ---------- */

const StatusBar = () => (
  <footer className={`flex h-[33px] items-center gap-[21px] border-t border-[#9b9b9b] pr-[9px] pl-6 text-xs text-[#858585] ${metal}`}>
    {[
      ["Design code:", "AISC - LRFD (2022)"],
      ["Analysis:", "Stress, strain"],
      ["Load effects:", "In equilibrium"],
      ["Units:", "in"],
    ].map(([k, v]) => (
      <span key={k}>
        {k} <b className="pl-[2px] font-semibold text-white">{v}</b>
      </span>
    ))}
    <a href="#site" className="ml-auto text-xs text-[#e8742c]">
      www.<span className="text-white">ideastatica</span>.com
    </a>
  </footer>
);

export default function App() {
  return (
    <div className="min-h-screen overflow-hidden bg-white pr-[10px] font-['Open_Sans','Noto_Sans',sans-serif]">
      <div className="flex min-h-screen flex-col border-l border-[#8a8a8a]">
        <TitleBar />
        <Ribbon />
        <main className="relative -ml-px flex min-h-[838px] flex-1">
          <div className="relative flex-1 border-l border-[#8a8a8a]">
            <Scene />
            <ViewToolbar />
            <div className="absolute top-[45px] right-[131px] flex gap-[5px] text-xs leading-[18px] font-semibold whitespace-nowrap text-black">
              <span className="text-[#e8742c]">Production cost</span>
              <span>-</span>
              <span>10 US$</span>
            </div>
            <ViewCube />
            <Tree />
          </div>
          <div className="w-[7px] shrink-0 border-r border-[#e8e8e8] bg-[#c9c9c9]" />
          <Properties />
          <CrossSectionDialog />
          <Navigator />
          <SimpleRolled />
          <Mark className="top-[48px] -right-[10px] h-10 w-[45px]" />
          <Mark className="top-[149px] right-[552px] h-[100px] w-[82px] rounded-[12px]" />
          <Mark className="top-[389px] right-[656px] h-[43px] w-9" />
          <Mark className="top-[171px] left-[708px] h-[38px] w-[169px]" />
          <Mark className="top-[772px] left-[652px] h-[43px] w-[118px]" />
          <Step n="1" className="top-[18px] right-[35px]" />
          <Step n="2" className="top-[229px] right-[510px]" />
          <Step n="3" className="top-[390px] right-[606px]" />
          <Step n="4" className="top-[171px] left-[886px]" />
          <Step n="5" className="top-[774px] left-[600px]" />
        </main>
        <StatusBar />
      </div>
    </div>
  );
}
